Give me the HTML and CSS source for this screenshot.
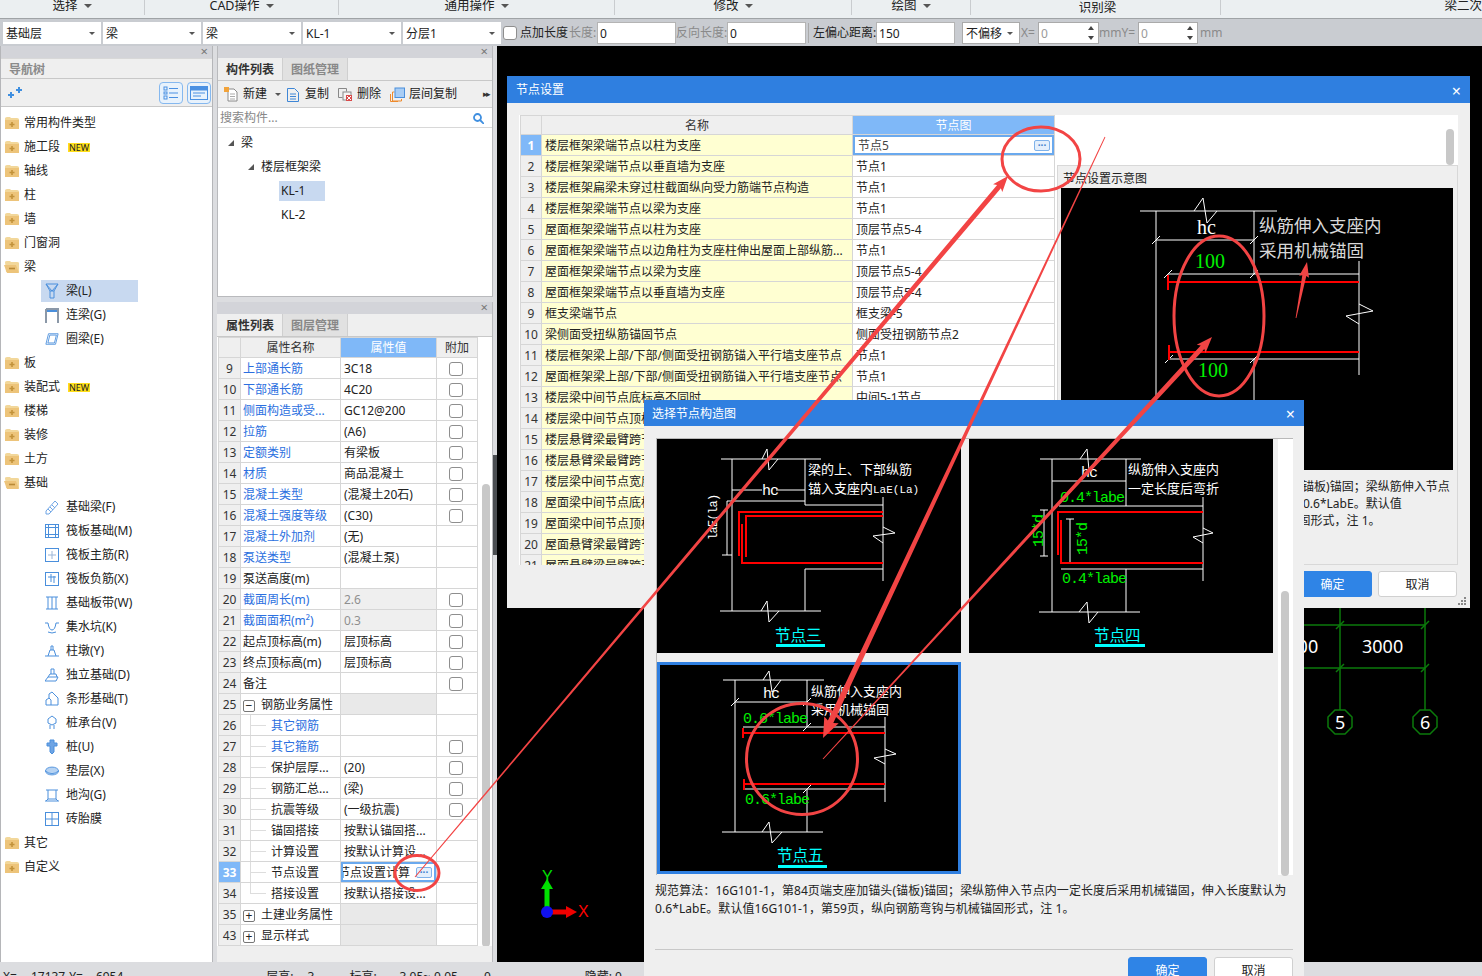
FILE: index.html
```html
<!DOCTYPE html>
<html lang="zh">
<head>
<meta charset="utf-8">
<title>节点设置</title>
<link rel="stylesheet" href="styles.css">
</head>
<body>
<svg class="defs" width="0" height="0">
  <defs>
    <symbol id="fc" viewBox="0 0 16 14"><path d="M1 3V2.5Q1 1 3 1h3l1 1h6q2 0 2 1.5V13H1z" fill="#f2d79a"/><path d="M1 4h14v9H1z" fill="#edc47a"/><path d="M8 6v5M5.5 8.500h5" stroke="#c2923a" stroke-width="1.600"/></symbol>
    <symbol id="fo" viewBox="0 0 16 14"><path d="M1 2q0-1 2-1h3l1 1h6q2 0 2 1v9H2z" fill="#f2d79a"/><path d="M0 5h12l3 8H3z" fill="#edc47a"/><path d="M5 8.500h6" stroke="#b98a36" stroke-width="1.600"/></symbol>
  </defs>
</svg>
<div class="app">
  <header class="ribbon">
    <div class="rg rg1">选择<i class="dn"></i></div>
    <div class="rg rg2">CAD操作<i class="dn"></i></div>
    <div class="rg rg3">通用操作<i class="dn"></i></div>
    <div class="rg rg4">修改<i class="dn"></i></div>
    <div class="rg rg5">绘图<i class="dn"></i></div>
    <div class="rg rg6 low">识别梁</div>
    <div class="rg rg7">梁二次</div>
  </header>

  <div class="toolbar">
    <div class="combo">基础层</div>
    <div class="combo">梁</div>
    <div class="combo">梁</div>
    <div class="combo">KL-1</div>
    <div class="combo">分层1</div>
    <span class="chk tchk"></span><span class="tl">点加长度</span><span class="tl gray l1">长度:</span>
    <div class="tin">0</div><span class="tl gray l2">反向长度:</span><div class="tin">0</div>
    <span class="tsep"></span><span class="tl l3">左偏心距离:</span><div class="tin w150">150</div>
    <div class="combo small">不偏移</div><span class="tl gray xeq">X=</span><div class="spin">0</div>
    <span class="tl gray l4">mmY=</span><div class="spin s60">0</div><span class="tl gray l5">mm</span>
  </div>

  <div class="main">
    <aside class="nav">
      <div class="phead"><span class="px">×</span></div>
      <div class="navtitle">导航树</div>
      <div class="navtools">
        <svg class="spark" width="14" height="12" viewBox="0 0 14 12"><path d="M0 8h6M3 5v6M8 3h6M11 0v6" stroke="#3f8fe0" stroke-width="2"/></svg>
        <span class="ntb"><svg width="16" height="14" viewBox="0 0 16 14" fill="none" stroke="#4a90e2"><rect x="1" y="1" width="3" height="3"/><rect x="1" y="6" width="3" height="2"/><rect x="1" y="10" width="3" height="3"/><path d="M6 2.500h9M6 7h9M6 11.500h9"/></svg></span>
        <span class="ntb"><svg width="18" height="14" viewBox="0 0 18 14" fill="none" stroke="#4a90e2"><rect x=".5" y=".5" width="17" height="13"/><rect x="1" y="1" width="16" height="3" fill="#4a90e2"/><path d="M3 7h12M3 10h8"/></svg></span>
      </div>
      <ul class="tree">
        <li class="f"><svg class="fi"><use href="#fc"/></svg>常用构件类型</li>
        <li class="f"><svg class="fi"><use href="#fc"/></svg>施工段<b class="newb">NEW</b></li>
        <li class="f"><svg class="fi"><use href="#fc"/></svg>轴线</li>
        <li class="f"><svg class="fi"><use href="#fc"/></svg>柱</li>
        <li class="f"><svg class="fi"><use href="#fc"/></svg>墙</li>
        <li class="f"><svg class="fi"><use href="#fc"/></svg>门窗洞</li>
        <li class="f"><svg class="fi"><use href="#fo"/></svg>梁</li>
        <li class="l sel"><svg class="li" viewBox="0 0 14 16" fill="none" stroke="#4a8fdc"><path d="M1 1h12L9 8v7H5V8z"/><path d="M1 1l6 7 6-7M5 8h4" /></svg>梁(L)</li>
        <li class="l"><svg class="li" viewBox="0 0 14 16" fill="none"><path d="M1 2h12v14M1 2v14" stroke="#8b98a8" stroke-width="2"/><path d="M2 4h10" stroke="#4a8fdc" stroke-width="2"/></svg>连梁(G)</li>
        <li class="l"><svg class="li" viewBox="0 0 16 16" fill="none" stroke="#4a8fdc"><path d="M4 2h11l-3 12H1z"/><path d="M5.500 3.500h7.500l-2.200 9H3.300z"/></svg>圈梁(E)</li>
        <li class="f"><svg class="fi"><use href="#fc"/></svg>板</li>
        <li class="f"><svg class="fi"><use href="#fc"/></svg>装配式<b class="newb">NEW</b></li>
        <li class="f"><svg class="fi"><use href="#fc"/></svg>楼梯</li>
        <li class="f"><svg class="fi"><use href="#fc"/></svg>装修</li>
        <li class="f"><svg class="fi"><use href="#fc"/></svg>土方</li>
        <li class="f"><svg class="fi"><use href="#fo"/></svg>基础</li>
        <li class="l"><svg class="li" viewBox="0 0 14 16" fill="none" stroke="#6ea4e4"><path d="M1 12L10 2l3 3-9 10H1z"/><path d="M3 10l3 3M5 8l3 3M7 6l3 3"/></svg>基础梁(F)</li>
        <li class="l"><svg class="li" viewBox="0 0 14 16" fill="none" stroke="#4a8fdc"><rect x=".5" y="1.500" width="13" height="13"/><rect x="3.500" y="4.500" width="7" height="7"/><path d="M.5 4.500h3M.5 11.500h3M10.500 4.500h3M10.500 11.500h3M3.500 1.500v3M10.500 1.500v3M3.500 11.500v3M10.500 11.500v3"/></svg>筏板基础(M)</li>
        <li class="l"><svg class="li" viewBox="0 0 14 16" fill="none" stroke="#4a8fdc"><rect x=".5" y="1.500" width="13" height="13"/><path d="M7 4v8M3 8h8" stroke="#9bb6d8"/></svg>筏板主筋(R)</li>
        <li class="l"><svg class="li" viewBox="0 0 14 16" fill="none" stroke="#4a8fdc"><rect x=".5" y="1.500" width="13" height="13"/><path d="M3 6h8M6 3v8M9 5v7"/></svg>筏板负筋(X)</li>
        <li class="l"><svg class="li" viewBox="0 0 14 16" fill="none" stroke="#4a8fdc"><path d="M1 2h12M1 14h12M3 2v12M7 2v12M11 2v12"/></svg>基础板带(W)</li>
        <li class="l"><svg class="li" viewBox="0 0 14 16" fill="none" stroke="#4a8fdc"><path d="M0 4h3q1 7 4 7t4-7h3"/><path d="M3 13q4 2 8 0"/></svg>集水坑(K)</li>
        <li class="l"><svg class="li" viewBox="0 0 14 16" fill="none" stroke="#4a8fdc"><path d="M0 13h14M3 13l2-6h4l2 6M6 7V3h2v4"/></svg>柱墩(Y)</li>
        <li class="l"><svg class="li" viewBox="0 0 14 16" fill="none" stroke="#4a8fdc"><path d="M0 14l3-4h10l-2 4zM3 10l2-3h6l1 3M6 7V2h3v5"/></svg>独立基础(D)</li>
        <li class="l"><svg class="li" viewBox="0 0 14 16" fill="none" stroke="#4a8fdc"><path d="M1 14V9l3-2V3l3-2 6 6v7H6V9L4 7M6 14l-5 0"/></svg>条形基础(T)</li>
        <li class="l"><svg class="li" viewBox="0 0 14 16" fill="none" stroke="#4a8fdc"><path d="M7 1l4 3v4l-4 2-4-2V4zM5 10v4M9 10v4"/></svg>桩承台(V)</li>
        <li class="l"><svg class="li" viewBox="0 0 14 16" fill="#6ea4e4" stroke="#4a8fdc"><path d="M5 1h4v3h3v3H9v6l-2 2-2-2V7H2V4h3z"/></svg>桩(U)</li>
        <li class="l"><svg class="li" viewBox="0 0 16 16" fill="#b7d3f2" stroke="#4a8fdc"><ellipse cx="8" cy="8" rx="7.500" ry="4.500"/><path d="M.5 8q7.500 6 15 0" fill="none"/></svg>垫层(X)</li>
        <li class="l"><svg class="li" viewBox="0 0 14 16" fill="none" stroke="#4a8fdc"><path d="M1 3h12M3 3v9h8V3M0 14h14M3 12l-2 2M11 12l2 2"/></svg>地沟(G)</li>
        <li class="l"><svg class="li" viewBox="0 0 14 16" fill="none" stroke="#4a8fdc"><rect x=".5" y="1.500" width="13" height="13"/><path d="M7 1.500v13M.5 8h13"/></svg>砖胎膜</li>
        <li class="f"><svg class="fi"><use href="#fc"/></svg>其它</li>
        <li class="f"><svg class="fi"><use href="#fc"/></svg>自定义</li>
      </ul>
    </aside>

    <section class="mid">
      <div class="pane pane-top">
        <div class="phead"><span class="px">×</span></div>
        <div class="tabs"><span class="tab on">构件列表</span><span class="tab">图纸管理</span></div>
        <div class="ctools">
          <span class="ct ct-new"><svg width="14" height="15" viewBox="0 0 14 15" fill="none"><path d="M4 2h6l3 3v9H4z" fill="#fff" stroke="#8a8a8a"/><path d="M6 7h5M6 9.500h5M6 12h5" stroke="#aaa"/><rect width="5" height="5" fill="#f2a33a"/></svg>新建<i class="dn sm"></i></span>
          <span class="ct ct-copy"><svg width="12" height="15" viewBox="0 0 12 15" fill="none" stroke="#3e86d6"><path d="M.5 1.500h7l4 4v9h-11z"/><path d="M3 7h6M3 9.500h6M3 12h6"/></svg>复制</span>
          <span class="ct"><svg width="14" height="14" viewBox="0 0 14 14" fill="none"><path d="M.5 1.500h8v3M.5 1.500v9h4" stroke="#888"/><rect x="5" y="5" width="8" height="8" fill="#f4f4f4" stroke="#888"/><rect x="8" y="8" width="6" height="6" fill="#d94b4b"/><path d="M9 9l4 4M13 9l-4 4" stroke="#fff"/></svg>删除</span>
          <span class="ct ct-layer"><svg width="15" height="15" viewBox="0 0 15 15" fill="none"><path d="M4.500 5h-2v9h9v-2M.5 7v7.500H8" stroke="#ee8a2c"/><rect x="5" y="1" width="9.500" height="9.500" fill="#a8cdf5" stroke="#4a8fdc"/></svg>层间复制</span>
          <span class="more">▸▸</span>
        </div>
        <div class="search"><span>搜索构件...</span><svg width="11" height="11" viewBox="0 0 11 11" fill="none" stroke="#3f8fe0" stroke-width="1.800"><circle cx="4.500" cy="4.500" r="3.500"/><path d="M7 7l4 4"/></svg></div>
        <ul class="ctree">
          <li class="t0"><i class="tri"></i>梁</li>
          <li class="t1"><i class="tri"></i>楼层框架梁</li>
          <li class="t2"><span class="csel">KL-1</span></li>
          <li class="t2"><span>KL-2</span></li>
        </ul>
      </div>
      <div class="pane pane-bot">
        <div class="phead"><span class="px">×</span></div>
        <div class="tabs"><span class="tab on">属性列表</span><span class="tab">图层管理</span></div>
        <div class="pwrap">
          <table class="ptable">
            <colgroup><col class="c1"><col class="c2"><col class="c3"><col class="c4"></colgroup>
            <thead><tr><th class="ix"></th><th>属性名称</th><th class="act">属性值</th><th>附加</th></tr></thead>
            <tbody>
              <tr><td class="ix">9</td><td class="bl">上部通长筋</td><td>3C18</td><td class="cb"><span class="chk"></span></td></tr>
              <tr><td class="ix">10</td><td class="bl">下部通长筋</td><td>4C20</td><td class="cb"><span class="chk"></span></td></tr>
              <tr><td class="ix">11</td><td class="bl">侧面构造或受...</td><td>GC12@200</td><td class="cb"><span class="chk"></span></td></tr>
              <tr><td class="ix">12</td><td class="bl">拉筋</td><td>(A6)</td><td class="cb"><span class="chk"></span></td></tr>
              <tr><td class="ix">13</td><td class="bl">定额类别</td><td>有梁板</td><td class="cb"><span class="chk"></span></td></tr>
              <tr><td class="ix">14</td><td class="bl">材质</td><td>商品混凝土</td><td class="cb"><span class="chk"></span></td></tr>
              <tr><td class="ix">15</td><td class="bl">混凝土类型</td><td>(混凝土20石)</td><td class="cb"><span class="chk"></span></td></tr>
              <tr><td class="ix">16</td><td class="bl">混凝土强度等级</td><td>(C30)</td><td class="cb"><span class="chk"></span></td></tr>
              <tr><td class="ix">17</td><td class="bl">混凝土外加剂</td><td>(无)</td><td></td></tr>
              <tr><td class="ix">18</td><td class="bl">泵送类型</td><td>(混凝土泵)</td><td></td></tr>
              <tr><td class="ix">19</td><td>泵送高度(m)</td><td></td><td></td></tr>
              <tr><td class="ix">20</td><td class="bl">截面周长(m)</td><td class="dis">2.6</td><td class="cb"><span class="chk"></span></td></tr>
              <tr><td class="ix">21</td><td class="bl">截面面积(m²)</td><td class="dis">0.3</td><td class="cb"><span class="chk"></span></td></tr>
              <tr><td class="ix">22</td><td>起点顶标高(m)</td><td>层顶标高</td><td class="cb"><span class="chk"></span></td></tr>
              <tr><td class="ix">23</td><td>终点顶标高(m)</td><td>层顶标高</td><td class="cb"><span class="chk"></span></td></tr>
              <tr><td class="ix">24</td><td>备注</td><td></td><td class="cb"><span class="chk"></span></td></tr>
              <tr><td class="ix">25</td><td class="grp"><span class="box">−</span>钢筋业务属性</td><td class="gv"></td><td></td></tr>
              <tr><td class="ix">26</td><td class="g bl">其它钢筋</td><td></td><td></td></tr>
              <tr><td class="ix">27</td><td class="g bl">其它箍筋</td><td></td><td class="cb"><span class="chk"></span></td></tr>
              <tr><td class="ix">28</td><td class="g">保护层厚...</td><td>(20)</td><td class="cb"><span class="chk"></span></td></tr>
              <tr><td class="ix">29</td><td class="g">钢筋汇总...</td><td>(梁)</td><td class="cb"><span class="chk"></span></td></tr>
              <tr><td class="ix">30</td><td class="g">抗震等级</td><td>(一级抗震)</td><td class="cb"><span class="chk"></span></td></tr>
              <tr><td class="ix">31</td><td class="g">锚固搭接</td><td>按默认锚固搭...</td><td></td></tr>
              <tr><td class="ix">32</td><td class="g">计算设置</td><td>按默认计算设...</td><td></td></tr>
              <tr><td class="ix on">33</td><td class="g">节点设置</td><td class="edit"><div class="editbox"><span class="edtx">节点设置计算</span><span class="dots">···</span></div></td><td></td></tr>
              <tr><td class="ix">34</td><td class="g last">搭接设置</td><td>按默认搭接设...</td><td></td></tr>
              <tr><td class="ix">35</td><td class="grp"><span class="box">+</span>土建业务属性</td><td class="gv"></td><td></td></tr>
              <tr><td class="ix">43</td><td class="grp"><span class="box">+</span>显示样式</td><td class="gv"></td><td></td></tr>
            </tbody>
          </table>
          <div class="pscroll"><span></span></div>
        </div>
      </div>
    </section>

    <div class="split"><span></span></div>

    <div class="canvas">
      <svg class="grid" viewBox="497 46 985 916" width="985" height="916" fill="none">
        <g stroke="#0b7a0b" stroke-width="1.500">
          <path d="M1340 600V710M1425 600V710M1200 625H1425M1200 668H1425"/>
          <path d="M1336 629l8-8M1421 629l8-8M1336 672l8-8M1421 672l8-8"/>
          <polygon points="1335,710 1345,710 1352,717 1352,727 1345,734 1335,734 1328,727 1328,717"/>
          <polygon points="1420,710 1430,710 1437,717 1437,727 1430,734 1420,734 1413,727 1413,717"/>
        </g>
        <text class="gt" x="1362" y="653">3000</text>
        <text class="gt" x="1277" y="653">3000</text>
        <text class="gt" x="1335" y="729">5</text>
        <text class="gt" x="1420" y="729">6</text>
        <path d="M547 912V888" stroke="#00e000" stroke-width="5"/>
        <path d="M547 879l-6 10h12z" fill="#00e000"/>
        <path d="M547 912H568" stroke="#f00000" stroke-width="5"/>
        <path d="M577 912l-11-6v12z" fill="#f00000"/>
        <circle cx="547" cy="912" r="6" fill="#1010f0"/>
        <text class="ax ay" x="542" y="882">Y</text>
        <text class="ax ar" x="578" y="917">X</text>
      </svg>
    </div>
  </div>

  <footer class="status">
    <span class="s0">X=</span><span class="s1">17137</span><span class="s2">Y=</span><span class="s3">6954</span>
    <span class="s4">层高:</span><span class="s5">3</span><span class="s6">标高:</span><span class="s7">-3.05~-0.05</span><span class="s8">0</span><span class="s9">隐藏: 0</span>
  </footer>

  <div class="dlg dlg1">
    <div class="dtitle"><span>节点设置</span><span class="dx">×</span></div>
    <div class="dbody">
      <div class="nwrap">
        <table class="ntable">
          <colgroup><col class="n1"><col class="n2"><col class="n3"></colgroup>
          <thead><tr><th class="ix"></th><th>名称</th><th class="act">节点图</th></tr></thead>
          <tbody>
            <tr><td class="ix on">1</td><td class="ye">楼层框架梁端节点以柱为支座</td><td class="nedit"><div class="editbox"><span>节点5</span><span class="dots">···</span></div></td></tr>
            <tr><td class="ix">2</td><td class="ye">楼层框架梁端节点以垂直墙为支座</td><td>节点1</td></tr>
            <tr><td class="ix">3</td><td class="ye">楼层框架扁梁未穿过柱截面纵向受力筋端节点构造</td><td>节点1</td></tr>
            <tr><td class="ix">4</td><td class="ye">楼层框架梁端节点以梁为支座</td><td>节点1</td></tr>
            <tr><td class="ix">5</td><td class="ye">屋面框架梁端节点以柱为支座</td><td>顶层节点5-4</td></tr>
            <tr><td class="ix">6</td><td class="ye">屋面框架梁端节点以边角柱为支座柱伸出屋面上部纵筋...</td><td>节点1</td></tr>
            <tr><td class="ix">7</td><td class="ye">屋面框架梁端节点以梁为支座</td><td>顶层节点5-4</td></tr>
            <tr><td class="ix">8</td><td class="ye">屋面框架梁端节点以垂直墙为支座</td><td>顶层节点5-4</td></tr>
            <tr><td class="ix">9</td><td class="ye">框支梁端节点</td><td>框支梁-5</td></tr>
            <tr><td class="ix">10</td><td class="ye">梁侧面受扭纵筋锚固节点</td><td>侧面受扭钢筋节点2</td></tr>
            <tr><td class="ix">11</td><td class="ye">楼层框架梁上部/下部/侧面受扭钢筋锚入平行墙支座节点</td><td>节点1</td></tr>
            <tr><td class="ix">12</td><td class="ye">屋面框架梁上部/下部/侧面受扭钢筋锚入平行墙支座节点</td><td>节点1</td></tr>
            <tr><td class="ix">13</td><td class="ye">楼层梁中间节点底标高不同时</td><td>中间5-1节点</td></tr>
            <tr><td class="ix">14</td><td class="ye">楼层梁中间节点顶标高不同时</td><td>中间5-2节点</td></tr>
            <tr><td class="ix">15</td><td class="ye">楼层悬臂梁最臂跨节点</td><td>节点1</td></tr>
            <tr><td class="ix">16</td><td class="ye">楼层悬臂梁最臂跨节点</td><td>节点1</td></tr>
            <tr><td class="ix">17</td><td class="ye">楼层梁中间节点宽度不同时</td><td>节点1</td></tr>
            <tr><td class="ix">18</td><td class="ye">屋面梁中间节点底标高不同时</td><td>节点1</td></tr>
            <tr><td class="ix">19</td><td class="ye">屋面梁中间节点顶标高不同时</td><td>节点1</td></tr>
            <tr><td class="ix">20</td><td class="ye">屋面悬臂梁最臂跨节点</td><td>节点1</td></tr>
            <tr><td class="ix">21</td><td class="ye">屋面悬臂梁最臂跨节点</td><td>节点1</td></tr>
          </tbody>
        </table>
        <span class="nthumb"></span>
        <div class="preview">
          <div class="ptitle">节点设置示意图</div>
          <svg class="cad big" viewBox="1061 188 392 282" width="392" height="282" fill="none">
            <g stroke="#fff">
              <path d="M1140 211H1277M1156 211V470M1254 211V274M1254 359V470M1156 240H1254M1168 274H1359M1169 359H1359M1359 261V375"/>
              <path d="M1194 211L1203 198L1207 223L1217 211M1359 304L1373 311L1346 316L1359 324"/>
              <path d="M1152 244l8-8M1250 244l8-8M1164 278l8-8M1250 278l8-8M1165 363l8-8M1250 363l8-8"/>
            </g>
            <path d="M1168 282H1359M1169 352H1359M1168 275V290M1169 345V360" stroke="#f00" stroke-width="2"/>
            <text class="w big" x="1197" y="234">hc</text>
            <text class="g big" x="1195" y="268">100</text>
            <text class="g big" x="1198" y="377">100</text>
            <text class="cn18" x="1259" y="232">纵筋伸入支座内</text>
            <text class="cn18" x="1259" y="257">采用机械锚固</text>
          </svg>
          <p class="pdesc">规范算法：16G101-1，第84页端支座加锚头(锚板)锚固；梁纵筋伸入节点<br>内一定长度后采用机械锚固，伸入长度默认为0.6*LabE。默认值<br>16G101-1，第59页，纵向钢筋弯钩与机械锚固形式，注 1。</p>
        </div>
      </div>
      <div class="dfoot"><button class="btn pri">确定</button><button class="btn">取消</button></div>
      <svg class="grip" width="9" height="9" viewBox="0 0 9 9" fill="#888"><rect x="6" y="0" width="2" height="2"/><rect x="3" y="3" width="2" height="2"/><rect x="6" y="3" width="2" height="2"/><rect x="0" y="6" width="2" height="2"/><rect x="3" y="6" width="2" height="2"/><rect x="6" y="6" width="2" height="2"/></svg>
    </div>
  </div>

  <div class="dlg dlg2">
    <div class="dtitle"><span>选择节点构造图</span><span class="dx">×</span></div>
    <div class="dbody2">
      <div class="gallery">
        <div class="cells">
          <svg class="cad" viewBox="657 439 304 214" width="304" height="214" fill="none">
            <g stroke="#fff">
              <path d="M721 459H821M732 459V611M805 459V505M805 569V611M720 611H821M805 505H883M805 569H883M883 497V581"/>
              <path d="M762 459L767 449L769 470L778 459M761 611L767 601L769 622L779 611M883 527L895 533L873 536L883 543"/>
              <path d="M732 490H762M776 490H805M727 501H805M727 501V555M722 555H732"/>
            </g>
            <path d="M883 512H739V556M883 516H746V557M742 524V563H883" stroke="#f00" stroke-width="2"/>
            <text class="w m" x="762" y="495">hc</text>
            <text class="w m rot" transform="rotate(-90 717 540)" x="717" y="540">laE(la)</text>
            <text class="w c" x="808" y="474">梁的上、下部纵筋</text>
            <text class="w c" x="808" y="493">锚入支座内<tspan class="sm">LaE(La)</tspan></text>
            <text class="name" x="775" y="641">节点三</text>
            <rect x="776" y="644" width="49" height="3" fill="#0ff"/>
          </svg>
          <svg class="cad" viewBox="969 439 304 214" width="304" height="214" fill="none">
            <g stroke="#fff">
              <path d="M1040 459H1141M1052 459V612M1126 459V506M1126 569V612M1039 612H1140M1052 481H1126M1059 506H1203M1061 569H1203M1203 497V581"/>
              <path d="M1080 459L1087 449L1089 470L1097 459M1079 612L1087 602L1089 623L1098 612M1203 528L1213 533L1193 537L1203 543"/>
              <path d="M1044 510V556M1040 510H1048M1040 556H1048M1070 519V563M1066 519H1074M1066 563H1074"/>
            </g>
            <path d="M1058 555V512H1203M1061 520V563H1203" stroke="#f00" stroke-width="2"/>
            <text class="w m" x="1081" y="477">hc</text>
            <text class="w c" x="1128" y="474">纵筋伸入支座内</text>
            <text class="w c" x="1128" y="493">一定长度后弯折</text>
            <text class="g m" x="1060" y="502">0.4*labe</text>
            <text class="g m" x="1062" y="583">0.4*labe</text>
            <text class="g m" transform="rotate(-90 1043 547)" x="1043" y="547">15*d</text>
            <text class="g m" transform="rotate(-90 1087 555)" x="1087" y="555">15*d</text>
            <text class="name" x="1094" y="641">节点四</text>
            <rect x="1095" y="644" width="50" height="3" fill="#0ff"/>
          </svg>
          <svg class="cad chosen" viewBox="657 662 304 212" width="304" height="212" fill="none">
            <g stroke="#fff">
              <path d="M723 680H824M735 680V832M807 680V727M807 789V832M722 832H823M735 702H807M743 727H885M745 789H885M885 717V802"/>
              <path d="M763 680L769 671L772 692L781 680M762 832L769 822L772 843L782 832M885 749L896 754L874 758L885 764"/>
              <path d="M731 706l8-8M803 706l8-8M803 731l8-8M803 793l8-8"/>
            </g>
            <path d="M743 733H885M744 784H885M743 728V738M744 779V790" stroke="#f00" stroke-width="2"/>
            <text class="w m" x="763" y="698">hc</text>
            <text class="w c" x="811" y="696">纵筋伸入支座内</text>
            <text class="w c" x="811" y="714">采用机械锚固</text>
            <text class="g m" x="743" y="723">0.6*labe</text>
            <text class="g m" x="745" y="804">0.6*labe</text>
            <text class="name" x="777" y="861">节点五</text>
            <rect x="778" y="865" width="49" height="3" fill="#0ff"/>
          </svg>
        </div>
        <div class="gtrack"><span></span></div>
      </div>
      <p class="gdesc">规范算法：16G101-1，第84页端支座加锚头(锚板)锚固；梁纵筋伸入节点内一定长度后采用机械锚固，伸入长度默认为<br>0.6*LabE。默认值16G101-1，第59页，纵向钢筋弯钩与机械锚固形式，注 1。</p>
      <div class="gfoot"><button class="btn pri">确定</button><button class="btn">取消</button></div>
    </div>
  </div>

  <svg class="marks" viewBox="0 0 1482 976" width="1482" height="976" fill="none">
    <g stroke="#f24444" stroke-width="3">
      <ellipse cx="417" cy="873" rx="22" ry="17.500"/>
      <ellipse cx="1041" cy="159" rx="39" ry="32"/>
      <ellipse cx="1219" cy="316" rx="45" ry="80"/>
      <circle cx="802" cy="759" r="55.500"/>
    </g>
    <g fill="#f24444">
      <polygon points="415.400,877.300 1000.900,188.300 1002.300,192.100 1008,176 993.100,184.300 997.100,185.100 414.600,876.700"/>
      <polygon points="1105.400,137.200 833.300,723 838.700,723.300 823,738 824.300,716.500 827.900,720.400 1104.600,136.800"/>
      <polygon points="823.400,759.300 1204.300,349 1205.500,352.900 1212,337 1196.700,344.700 1200.700,345.600 822.600,758.700"/>
      <polygon points="1296.400,318 1306.300,276.100 1309,277.700 1307,262 1299.200,275.700 1302.300,275.300 1295.600,318"/>
    </g>
  </svg>
</div>
</body>
</html>
```
FILE: styles.css
```css
* { box-sizing: border-box; }
html, body { margin: 0; padding: 0; }
body { font: 12px/1.2 "Noto Sans", "Noto Sans CJK SC", sans-serif; color: #222; background: #000; }
ul { list-style: none; margin: 0; padding: 0; }
p { margin: 0; }
.defs { position: absolute; }

.app { position: relative; width: 1482px; height: 976px; overflow: hidden; display: flex; flex-direction: column; }

/* ribbon */
.ribbon { height: 19px; display: flex; background: #ebeff1; border-bottom: 1px solid #9fa3a6; flex: none; overflow: hidden; }
.rg { height: 15px; border-right: 1px solid #c9cccf; text-align: center; line-height: 12px; font-size: 12.5px; white-space: nowrap; }
.rg1 { width: 145px; } .rg2 { width: 194px; } .rg3 { width: 276px; }
.rg4 { width: 237px; } .rg5 { width: 119px; } .rg6 { width: 250px; padding-left: 4px; }
.rg7 { flex: 1; border: 0; text-align: right; overflow: hidden; }
.rg.low { line-height: 16px; }
.dn { display: inline-block; width: 0; height: 0; border: 4px solid transparent; border-top: 4px solid #555; border-bottom: 0; margin-left: 6px; vertical-align: 2px; }
.dn.sm { border-width: 3px; border-top-color: #555; border-bottom: 0; margin-left: 3px; }

/* toolbar */
.toolbar { height: 27px; flex: none; display: flex; align-items: center; padding: 0 0 0 3px; background: #c9ccd1; white-space: nowrap; }
.combo { width: 98px; height: 22px; background: #fff; line-height: 23px; padding-left: 3px; margin-right: 2px; position: relative; flex: none; }
.combo::after { content: ""; position: absolute; right: 6px; top: 10px; border: 3px solid transparent; border-top: 3px solid #555; border-bottom: 0; }
.combo.small { width: 58px; margin: 0 0 0 7px; border: 1px solid #aaa; line-height: 21px; }
.combo.small::after { top: 9px; }
.chk { display: inline-block; width: 14px; height: 14px; background: #fff; border: 1px solid #8e8e8e; border-radius: 3px; }
.tchk { margin: 0 3px 0 0; flex: none; }
.tl { flex: none; padding-top: 1px; }
.tl.gray { color: #8a8a8a; }
.l1 { width: 27px; margin-left: 1px; margin-right: 1px; }
.l2 { width: 51px; }
.l3 { width: 63px; margin-left: 4px; }
.l4 { width: 39px; margin-left: 0; }
.l5 { margin-left: 2px; }
.xeq { width: 17px; margin-left: 1px; }
.tin { width: 79px; height: 22px; background: #fff; border: 1px solid #b4b4b4; line-height: 21px; padding-left: 2px; flex: none; }
.tsep { width: 1px; height: 20px; background: #aaa; margin: 0 0 0 2px; flex: none; }
.spin { width: 61px; height: 22px; background: #fff; border: 1px solid #aaa; color: #9a9a9a; line-height: 21px; padding-left: 2px; position: relative; flex: none; }
.spin.s60 { width: 60px; }
.spin::before, .spin::after { content: ""; position: absolute; right: 4px; border: 3px solid transparent; }
.spin::before { top: 3px; border-bottom: 4px solid #444; border-top: 0; }
.spin::after { bottom: 3px; border-top: 4px solid #444; border-bottom: 0; }

/* main */
.main { flex: none; height: 916px; display: flex; background: #dcdde0; }
.phead { height: 12px; background: #d3d4d9; position: relative; flex: none; }
.px { position: absolute; right: 4px; top: -3px; font-size: 13px; line-height: 16px; color: #777; }

.nav { width: 213px; flex: none; background: #fff; border-right: 1px solid #b5b6b9; border-left: 1px solid #b5b6b9; display: flex; flex-direction: column; }
.navtitle { height: 21px; line-height: 21px; background: #efefef; padding-left: 8px; color: #8a8a8a; font-weight: 700; border-top: 1px solid #d8d8d8; border-bottom: 1px solid #c8c8c8; }
.navtools { height: 28px; background: #efefef; border-bottom: 1px solid #c8c8c8; display: flex; align-items: center; gap: 4px; padding-right: 1px; }
.spark { margin: 0 auto 0 7px; }
.ntb { width: 24px; height: 22px; border: 1px solid #85b8ef; border-radius: 4px; background: #e8f2fc; display: flex; align-items: center; justify-content: center; }
.tree { padding-top: 4px; }
.tree li { height: 24px; display: flex; align-items: center; white-space: nowrap; }
.tree li.f { padding-left: 3px; }
.fi { width: 16px; height: 14px; margin-right: 4px; flex: none; }
.tree li.l { margin-left: 40px; width: 97px; padding-left: 4px; height: 24px; }
.tree li.sel { background: linear-gradient(#fff 0 1px, #c8d9f0 1px 23px, #fff 23px); background-clip: padding-box; }
.li { width: 14px; height: 16px; margin-right: 7px; flex: none; }
.newb { font-size: 9px; line-height: 9px; background: #ffdf1a; color: #222; margin-left: 8px; padding: 0 1px; font-weight: 400; }

.mid { width: 276px; margin-left: 4px; flex: none; display: flex; flex-direction: column; gap: 5px; }
.pane { background: #fff; display: flex; flex-direction: column; }
.pane-top { height: 251px; border: 1px solid #b9babd; border-top: 0; }
.pane-bot { height: 660px; background: #efefef; border-right: 1px solid #b9babd; }
.tabs { height: 23px; background: #efefef; display: flex; border-bottom: 1px solid #c8c8c8; padding-left: 1px; flex: none; }
.tab { width: 65px; text-align: center; line-height: 23px; color: #888; background: #e1e1e1; font-weight: 700; border-right: 1px solid #cfcfcf; }
.tab.on { color: #333; background: #efefef; }
.pane-top .tabs { padding-left: 0; }
.ctools { height: 27px; background: #efefef; display: flex; align-items: center; padding-left: 6px; border-bottom: 1px solid #d0d0d0; position: relative; }
.ct { display: flex; align-items: center; gap: 5px; margin-right: 9px; white-space: nowrap; }
.ct-new { margin-right: 6px; }
.ct-copy { gap: 6px; }
.ct-layer { gap: 4px; }
.more { position: absolute; right: 3px; font-size: 9px; letter-spacing: -2px; color: #333; }
.search { height: 20px; background: #fff; color: #888; display: flex; align-items: center; justify-content: space-between; padding: 2px 8px 0 2px; border-bottom: 1px solid #d8d8d8; }
.ctree { flex: 1; padding-top: 3px; }
.ctree li { height: 24px; line-height: 24px; position: relative; }
.t0 { padding-left: 23px; } .t1 { padding-left: 43px; } .t2 { padding-left: 61px; }
.tri { position: absolute; top: 9px; width: 0; height: 0; border-left: 6px solid transparent; border-bottom: 6px solid #555; }
.t0 .tri { left: 10px; } .t1 .tri { left: 30px; }
.t2 span { display: inline-block; width: 46px; padding-left: 2px; height: 20px; line-height: 20px; }
.csel { background: #c8d9f0; }

.pwrap { display: flex; align-items: flex-start; background: #fff; flex: 1; position: relative; }
.pwrap::after { content: ""; position: absolute; left: 0; right: 0; bottom: 0; height: 16px; background: #efefef; }
.ptable, .ntable { border-collapse: collapse; table-layout: fixed; background: #fff; }
.ptable { width: 259px; margin-left: 1px; flex: none; }
.ptable col.c1 { width: 22px; } .ptable col.c2 { width: 100px; } .ptable col.c3 { width: 96px; } .ptable col.c4 { width: 41px; }
.ptable th { height: 20px; padding: 2px 0 0; font-weight: 400; background: #efefef; border: 1px solid #d6d6d6; color: #333; }
.ntable th { height: 19px; padding: 2px 0 0; font-weight: 400; background: #efefef; border: 1px solid #d6d6d6; color: #333; }
.ptable th.act, .ntable th.act { background: #7fb8f8; color: #fff; }
.ptable td, .ntable td { height: 21px; padding: 0 0 0 2px; border: 1px solid #d6d6d6; white-space: nowrap; overflow: hidden; line-height: 19px; }
.ntable td { padding-left: 3px; }
td.ix { background: #efefef; text-align: center; padding: 0 !important; color: #333; }
td.ix.on { background: #7fb8f8; color: #fff; font-weight: 700; }
.ptable td:nth-child(3) { padding-left: 3px; }
.bl { color: #2b6fe0; }
.dis { background: #efefef; color: #8f8f8f; }
.cb { text-align: center; padding: 0 !important; }
.cb .chk { vertical-align: middle; margin: -1px 0 0 -2px; }
.grp { padding-left: 2px; }
.box { display: inline-block; width: 12px; height: 12px; line-height: 10px; border: 1px solid #777; border-radius: 2px; text-align: center; margin-right: 6px; vertical-align: -1px; font-size: 12px; }
.gv { background: #e9e9e9; }
.ptable td.g { position: relative; padding-left: 30px; }
td.g::before { content: ""; position: absolute; left: 9px; top: 0; bottom: 0; width: 1px; background: #ddd; }
td.g::after { content: ""; position: absolute; left: 9px; top: 10px; width: 16px; height: 1px; background: #ddd; }
td.g.last::before { bottom: 10px; }
td.edit, td.nedit { padding: 0 !important; }
.editbox { height: 20px; border: 2px solid #6aa9ee; background: #fff; display: flex; align-items: center; justify-content: space-between; overflow: hidden; padding-right: 2px; }
.edtx { white-space: nowrap; flex: none; margin-left: -5px; }
.dots { width: 16px; height: 11px; flex: none; background: #e3effc; border: 1px solid #7fb2ea; border-radius: 2px; color: #3f80cc; font-size: 10px; font-weight: 700; line-height: 8px; text-align: center; margin-left: auto; }
.nedit span:first-child { padding-left: 3px; color: #444; }
.pscroll { flex: 1; height: 100%; position: relative; }
.pscroll span { position: absolute; left: 4px; width: 8px; top: 147px; height: 463px; background: #c8c8c8; border-radius: 4px; }

.split { width: 4px; flex: none; position: relative; }
.split span { position: absolute; left: 0; top: 409px; width: 4px; height: 100px; background: #4b4e52; }
.canvas { flex: 1; background: #000; position: relative; overflow: hidden; }
.grid { position: absolute; left: 0; top: 0; }
.gt { fill: #fff; font-size: 18px; font-family: "Noto Sans", sans-serif; }
.ax { font-size: 16px; font-family: "Liberation Sans", sans-serif; }
.ay { fill: #00e000; } .ar { fill: #f00; }

.status { height: 14px; flex: none; background: #dcdde0; line-height: 30px; position: relative; overflow: hidden; display: flex; white-space: nowrap; }
.s0 { margin-left: 3px; } .s1 { margin-left: 14px; } .s2 { margin-left: 4px; } .s3 { margin-left: 13px; }
.s4 { margin-left: 143px; } .s5 { margin-left: 14px; } .s6 { margin-left: 35px; } .s7 { margin-left: 19px; } .s8 { margin-left: 26px; } .s9 { margin-left: 94px; }

/* dialogs */
.dlg { position: absolute; background: #efefef; display: flex; flex-direction: column; }
.dlg1 { left: 507px; top: 76px; width: 963px; height: 532px; }
.dlg2 { left: 644px; top: 400px; width: 660px; height: 620px; }
.dtitle { height: 27px; flex: none; background: #2f7fe0; color: #fff; display: flex; align-items: center; justify-content: space-between; padding: 2px 9px 0; }
.dlg2 .dtitle { height: 26px; padding-left: 8px; }
.dx { font-size: 16px; line-height: 16px; }
.dbody { flex: 1; padding: 12px 12px 0 12px; position: relative; }
.nwrap { position: relative; width: 939px; height: 450px; background: #fff; overflow: hidden; }
.ntable { width: 534px; margin-left: 1px; }
.ntable col.n1 { width: 21px; } .ntable col.n2 { width: 311px; } .ntable col.n3 { width: 202px; }
.ye { background: #ffffd2; }
.nthumb { position: absolute; left: 927px; top: 14px; width: 8px; height: 36px; background: #c8c8c8; border-radius: 4px; }
.preview { position: absolute; left: 538px; top: 50px; width: 401px; height: 400px; background: #efefef; border: 1px solid #d8d8d8; padding: 3px; }
.ptitle { height: 19px; line-height: 19px; padding-left: 2px; }
.cad { display: block; background: #000; }
.pdesc { line-height: 17px; margin-top: 8px; padding-left: 2px; white-space: nowrap; }
.dfoot { display: flex; justify-content: flex-end; gap: 6px; padding: 6px 1px 0 0; }
.btn { width: 79px; height: 26px; font: inherit; background: #fff; color: #222; border: 1px solid #d0d0d0; border-radius: 3px; padding: 2px 0 0; }
.btn.pri { background: #2f84e6; color: #fff; border-color: #2f84e6; }
.grip { position: absolute; right: 3px; bottom: 2px; }

.dbody2 { padding: 12px 11px 0 12px; }
.gallery { display: flex; height: 437px; border-top: 1px solid #b9b9b9; border-left: 1px solid #b9b9b9; width: 637px; background: #efefef; }
.cells { width: 621px; display: grid; grid-template-columns: 304px 304px; grid-auto-rows: 214px; gap: 9px 8px; }
.cad.chosen { outline: 3px solid #2f7fe0; outline-offset: -3px; }
.gtrack { flex: 1; background: #fff; position: relative; }
.gtrack span { position: absolute; left: 3px; width: 8px; top: 152px; height: 285px; background: #c8c8c8; border-radius: 4px; }
.gdesc { line-height: 18px; margin: 7px 0 0 -1px; white-space: nowrap; height: 67px; letter-spacing: .08px; }
.gfoot { border-top: 1px solid #c8c8c8; display: flex; justify-content: flex-end; gap: 7px; padding-top: 7px; margin-left: -1px; }

/* CAD text */
.w { fill: #fff; } .g { fill: #00f000; }
.m { font: 15px "Liberation Mono", monospace; letter-spacing: -1px; }
.m.rot { font-size: 12px; letter-spacing: -.7px; }
.c { font: 13px "Noto Sans CJK SC", sans-serif; }
.c .sm { font: 11px "Liberation Mono", monospace; }
.name { font: 15.500px "Noto Sans CJK SC", sans-serif; fill: #0ff; }
.big { font: 20px "Liberation Serif", serif; }
.cn18 { font: 17.500px "Noto Sans CJK SC", sans-serif; fill: #d8d8d8; }

.marks { position: absolute; left: 0; top: 0; pointer-events: none; z-index: 5; }
```
